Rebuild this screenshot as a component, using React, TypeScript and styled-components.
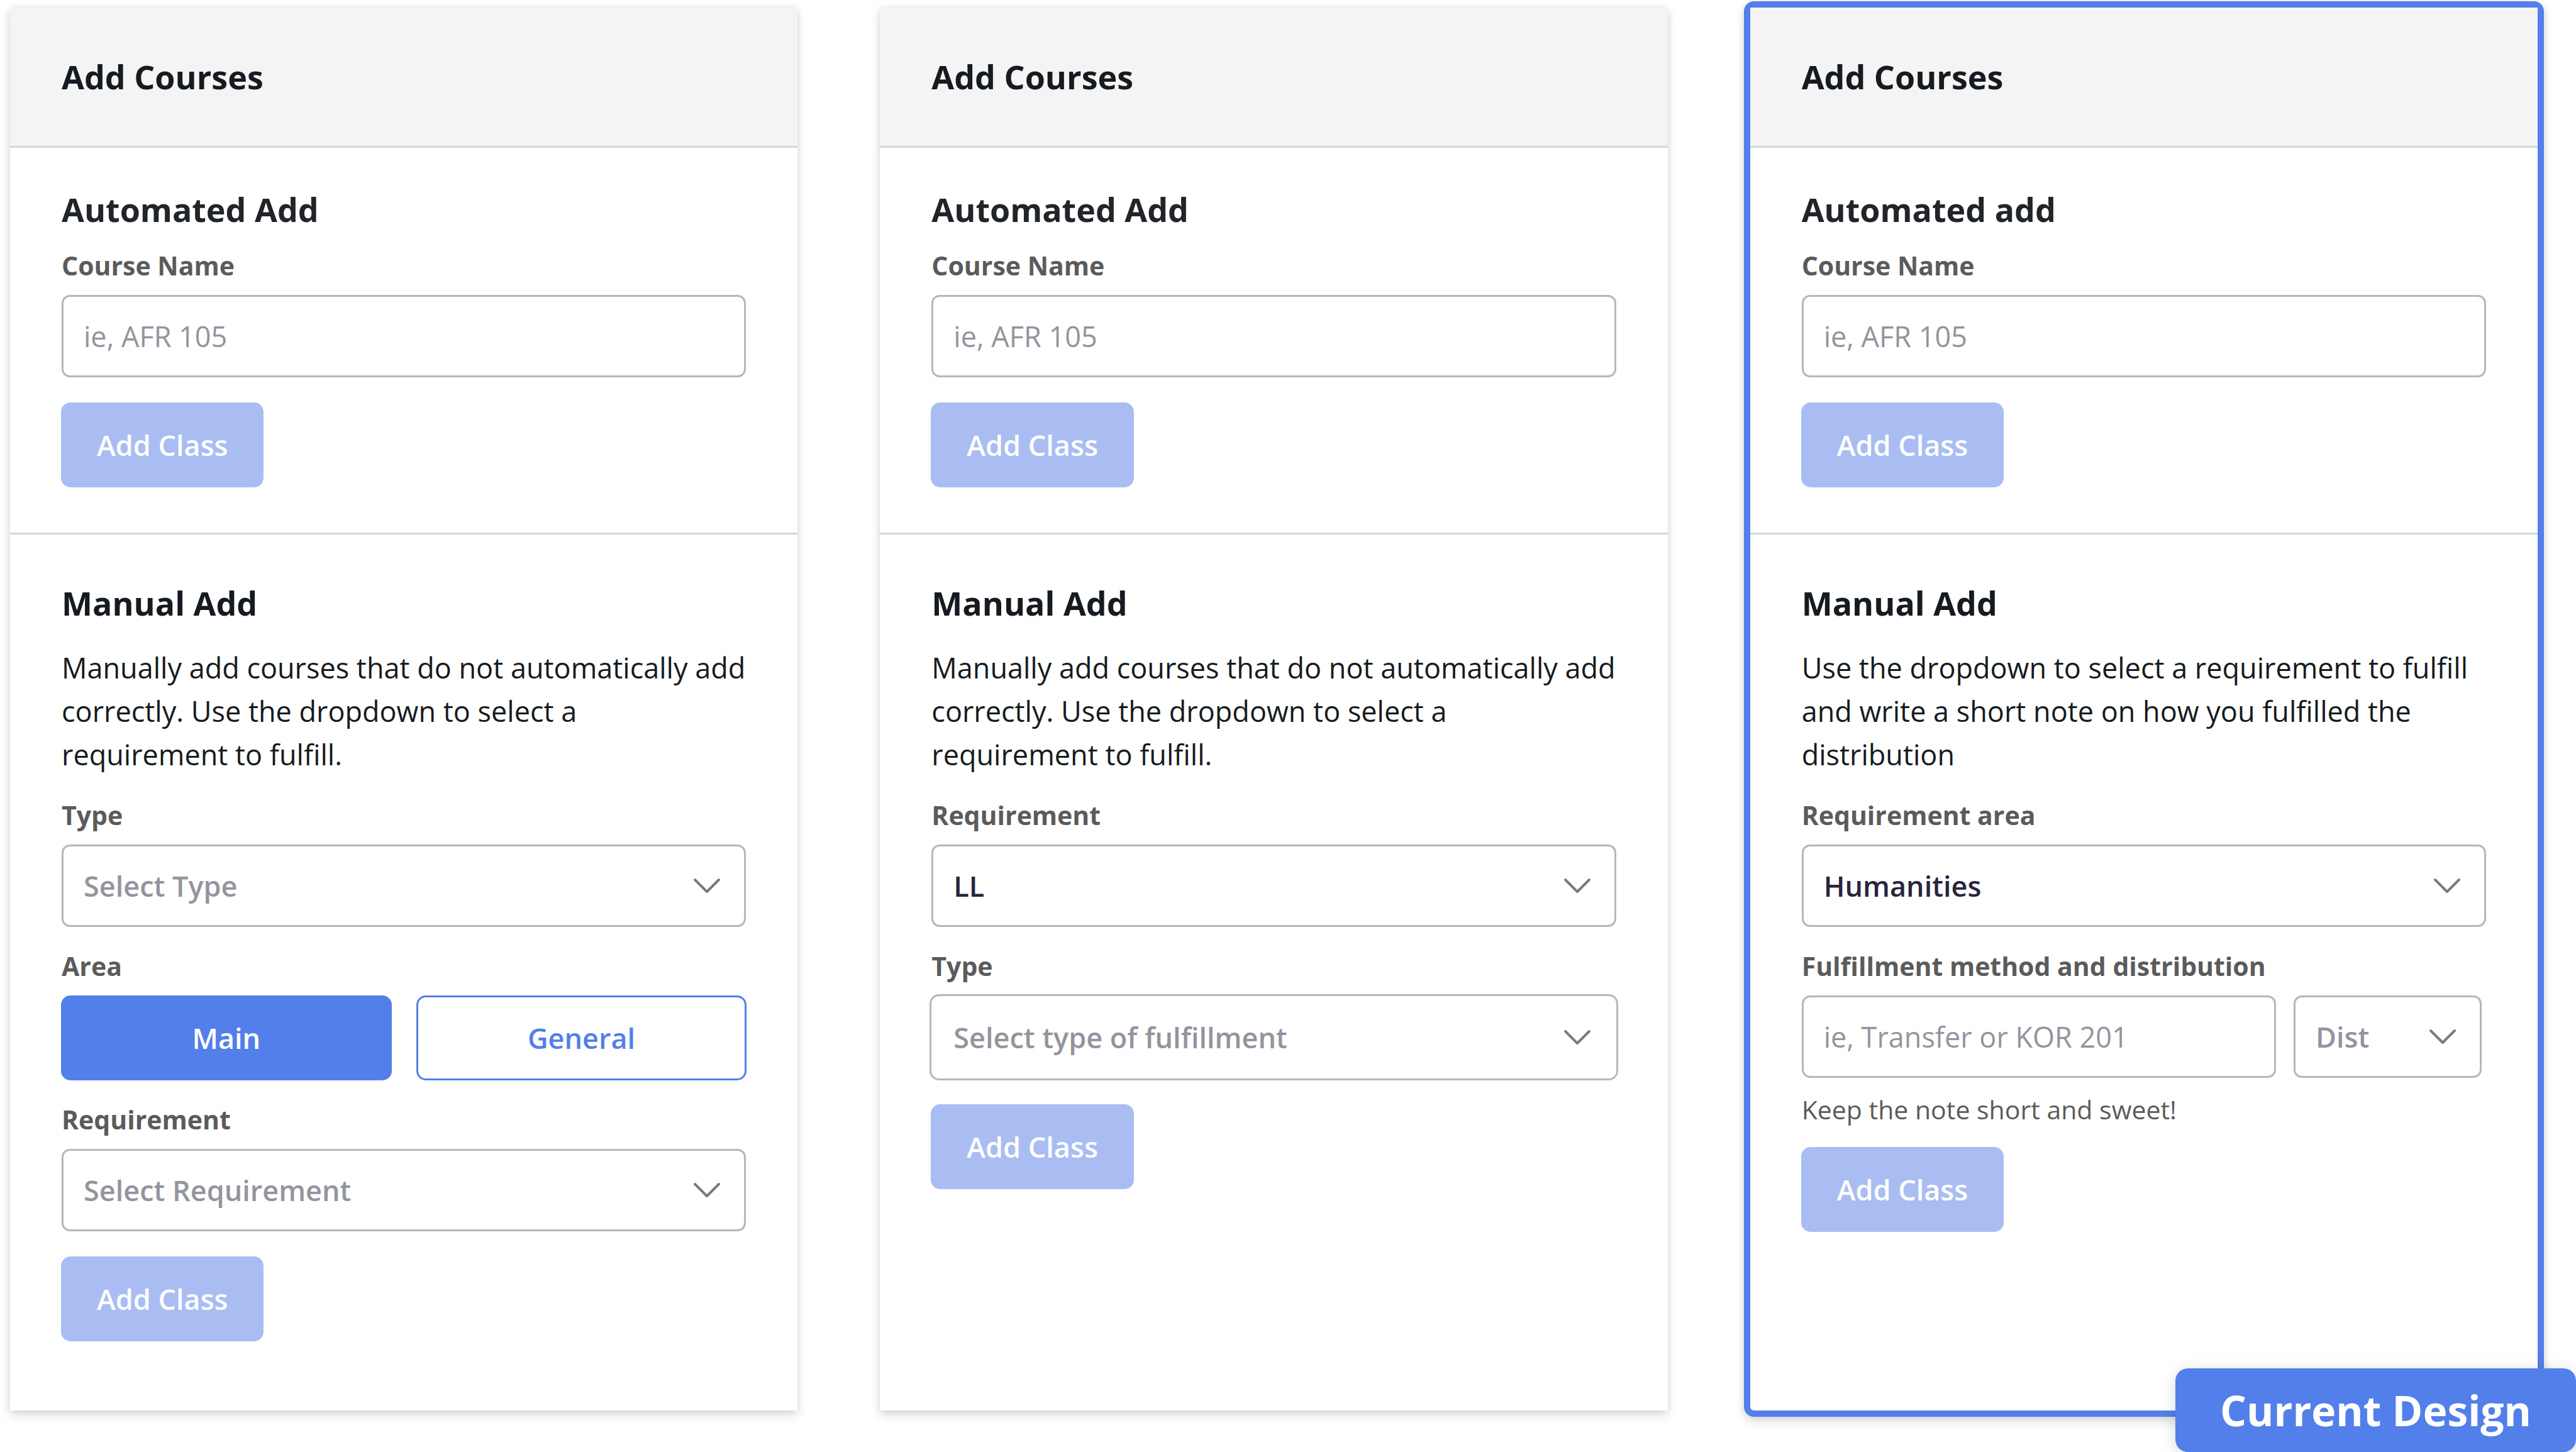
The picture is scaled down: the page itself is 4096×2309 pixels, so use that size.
import React, { useId, useState } from "react";
import styled, { createGlobalStyle, css } from "styled-components";

const color = {
  blue: "#527fe9",
  blueDisabled: "#a9bdf2",
  ink: "#151b20",
  inkSoft: "#212529",
  label: "#5b5b5b",
  value: "#28253d",
  placeholder: "#94949e",
  border: "#b6b6bd",
  line: "#d0d7e0",
  header: "#f4f4f4",
};

const GlobalStyle = createGlobalStyle`
  *, *::before, *::after { box-sizing: border-box; }
  body {
    margin: 0;
    background: #fff;
    color: ${color.ink};
    font-family: "Open Sans", "Noto Sans", sans-serif;
  }
  button, input, select { font-family: inherit; margin: 0; }
`;

const Board = styled.main`
  display: grid;
  grid-template-columns: repeat(3, minmax(0, 1fr));
  gap: 131px;
  padding: 12px 61px 66px 16px;
`;

const Card = styled.section<{ $current?: boolean }>`
  position: relative;
  display: flex;
  flex-direction: column;
  background: #fff;
  box-shadow: 0 7px 16px rgba(0, 0, 0, 0.14), 0 0 10px rgba(0, 0, 0, 0.07);
  ${(p) =>
    p.$current &&
    css`
      margin: -10px;
      border: 10px solid ${color.blue};
      border-radius: 16px;
    `}
`;

const CardHeader = styled.header`
  display: flex;
  align-items: center;
  height: 223px;
  padding: 0 82px;
  background: ${color.header};
  border-bottom: 3px solid ${color.line};
`;

const Title = styled.h2`
  margin: 0;
  font-size: 52px;
  line-height: 72px;
  font-weight: 700;
`;

const Section = styled.form<{ $last?: boolean }>`
  display: flex;
  flex-direction: column;
  padding: ${(p) => (p.$last ? "73px 82px 110px" : "62px 82px 72px")};
  border-bottom: ${(p) => (p.$last ? "none" : `3px solid ${color.line}`)};
`;

const SectionTitle = styled.h3<{ $soft?: boolean }>`
  margin: 0;
  font-size: 52px;
  line-height: 72px;
  font-weight: 700;
  color: ${(p) => (p.$soft ? color.inkSoft : color.ink)};
`;

const Copy = styled.p`
  margin: 32px 0 0;
  font-size: 45px;
  line-height: 69px;
`;

const Group = styled.div<{ $tight?: boolean }>`
  display: flex;
  flex-direction: column;
  margin-top: ${(p) => (p.$tight ? 23 : 32)}px;
`;

const labelText = css`
  margin-bottom: 17px;
  font-size: 41px;
  line-height: 60px;
  font-weight: 700;
  color: ${color.label};
`;

const Label = styled.label`
  ${labelText}
`;

const GroupLabel = styled.span`
  ${labelText}
`;

const fieldBox = css`
  width: 100%;
  height: 131px;
  padding: 0 32px;
  border: 3px solid ${color.border};
  border-radius: 13px;
  background: #fff;
  font-size: 45px;
  line-height: 60px;
  outline: none;
`;

const TextField = styled.input`
  ${fieldBox}
  color: ${color.value};
  &::placeholder {
    color: ${color.placeholder};
    opacity: 1;
  }
`;

const SelectWrap = styled.div<{ $large?: boolean }>`
  display: grid;
  align-items: center;
  margin: ${(p) => (p.$large ? "-2px -3px" : "0")};
  > * {
    grid-area: 1 / 1;
  }
`;

const SelectField = styled.select<{ $large?: boolean; $empty: boolean }>`
  ${fieldBox}
  appearance: none;
  font-weight: 600;
  color: ${(p) => (p.$empty ? color.placeholder : color.value)};
  ${(p) =>
    p.$large &&
    css`
      height: 137px;
      padding: 0 35px;
      border-radius: 15px;
    `}
`;

const Chevron = styled.svg<{ $large?: boolean }>`
  justify-self: end;
  width: 44px;
  height: 26px;
  margin-right: ${(p) => (p.$large ? 43 : 40)}px;
  fill: none;
  stroke: #7b7b7b;
  stroke-width: 4;
  stroke-linecap: round;
  stroke-linejoin: round;
  pointer-events: none;
`;

const SplitRow = styled.div`
  display: grid;
  grid-template-columns: minmax(0, 1fr) 299px;
  gap: 28px;
  padding-right: 7px;
`;

const ToggleRow = styled.div`
  display: grid;
  grid-template-columns: 1fr 1fr;
  gap: 39px;
  margin: 0 -1px;
`;

const Button = styled.button<{ $variant: "solid" | "outline" }>`
  height: 135px;
  padding: 0 54px;
  border: 3px solid ${color.blue};
  border-radius: 15px;
  background: ${(p) => (p.$variant === "solid" ? color.blue : "#fff")};
  color: ${(p) => (p.$variant === "solid" ? "#fff" : color.blue)};
  font-size: 45px;
  line-height: 60px;
  font-weight: 600;
  cursor: pointer;
  &:disabled {
    border-color: ${color.blueDisabled};
    background: ${color.blueDisabled};
    color: #fff;
    cursor: default;
  }
`;

const Submit = styled(Button)<{ $close?: boolean }>`
  align-self: flex-start;
  margin: ${(p) => (p.$close ? 30 : 40)}px 0 0 -1px;
`;

const Hint = styled.p`
  margin: 20px 0 0;
  font-size: 41px;
  line-height: 60px;
  color: ${color.label};
`;

const Badge = styled.strong`
  position: absolute;
  right: -61px;
  bottom: -66px;
  padding: 21px 71px 22px;
  border-radius: 20px;
  background: ${color.blue};
  box-shadow: 0 4px 24px rgba(0, 0, 0, 0.16);
  color: #fff;
  font-size: 66px;
  line-height: 90px;
  font-weight: 700;
  white-space: nowrap;
`;

type DropdownProps = {
  id?: string;
  placeholder: string;
  options: string[];
  initial?: string;
  large?: boolean;
  ariaLabel?: string;
};

function Dropdown({ id, placeholder, options, initial = "", large, ariaLabel }: DropdownProps) {
  const [value, setValue] = useState(initial);
  return (
    <SelectWrap $large={large}>
      <SelectField
        id={id}
        aria-label={ariaLabel}
        $large={large}
        $empty={value === ""}
        value={value}
        onChange={(e) => setValue(e.target.value)}
      >
        <option value="">{placeholder}</option>
        {options.map((o) => (
          <option key={o}>{o}</option>
        ))}
      </SelectField>
      <Chevron $large={large} viewBox="0 0 44 26" aria-hidden="true">
        <path d="M3 3 L22 22 L41 3" />
      </Chevron>
    </SelectWrap>
  );
}

function LabeledDropdown({ label, ...rest }: DropdownProps & { label: string }) {
  const id = useId();
  return (
    <Group>
      <Label htmlFor={id}>{label}</Label>
      <Dropdown id={id} {...rest} />
    </Group>
  );
}

function AutomatedAdd({ title }: { title: string }) {
  const id = useId();
  return (
    <Section>
      <SectionTitle $soft>{title}</SectionTitle>
      <Group $tight>
        <Label htmlFor={id}>Course Name</Label>
        <TextField id={id} type="text" placeholder="ie, AFR 105" />
      </Group>
      <Submit $variant="solid" type="submit" disabled>
        Add Class
      </Submit>
    </Section>
  );
}

function AreaToggle() {
  const id = useId();
  const [area, setArea] = useState("Main");
  return (
    <Group role="group" aria-labelledby={id}>
      <GroupLabel id={id}>Area</GroupLabel>
      <ToggleRow>
        {["Main", "General"].map((name) => (
          <Button
            key={name}
            type="button"
            $variant={area === name ? "solid" : "outline"}
            aria-pressed={area === name}
            onClick={() => setArea(name)}
          >
            {name}
          </Button>
        ))}
      </ToggleRow>
    </Group>
  );
}

function FulfillmentRow() {
  const id = useId();
  return (
    <Group>
      <Label htmlFor={id}>Fulfillment method and distribution</Label>
      <SplitRow>
        <TextField id={id} type="text" placeholder="ie, Transfer or KOR 201" />
        <Dropdown placeholder="Dist" options={["LL", "HS"]} ariaLabel="Distribution" />
      </SplitRow>
      <Hint>Keep the note short and sweet!</Hint>
    </Group>
  );
}

const manualCopy =
  "Manually add courses that do not automatically add correctly. Use the dropdown to select a requirement to fulfill.";

export default function App() {
  return (
    <>
      <GlobalStyle />
      <Board>
        <Card>
          <CardHeader>
            <Title>Add Courses</Title>
          </CardHeader>
          <AutomatedAdd title="Automated Add" />
          <Section $last>
            <SectionTitle>Manual Add</SectionTitle>
            <Copy>{manualCopy}</Copy>
            <LabeledDropdown label="Type" placeholder="Select Type" options={["Transfer", "Course"]} />
            <AreaToggle />
            <LabeledDropdown label="Requirement" placeholder="Select Requirement" options={["LL", "HS"]} />
            <Submit $variant="solid" type="submit" disabled>
              Add Class
            </Submit>
          </Section>
        </Card>

        <Card>
          <CardHeader>
            <Title>Add Courses</Title>
          </CardHeader>
          <AutomatedAdd title="Automated Add" />
          <Section $last>
            <SectionTitle>Manual Add</SectionTitle>
            <Copy>{manualCopy}</Copy>
            <LabeledDropdown label="Requirement" placeholder="Select Requirement" options={["LL", "HS"]} initial="LL" />
            <LabeledDropdown
              label="Type"
              placeholder="Select type of fulfillment"
              options={["Transfer", "Course"]}
              large
            />
            <Submit $variant="solid" type="submit" disabled>
              Add Class
            </Submit>
          </Section>
        </Card>

        <Card $current>
          <CardHeader>
            <Title>Add Courses</Title>
          </CardHeader>
          <AutomatedAdd title="Automated add" />
          <Section $last>
            <SectionTitle>Manual Add</SectionTitle>
            <Copy>
              Use the dropdown to select a requirement to fulfill and write a short note on how you fulfilled the
              distribution
            </Copy>
            <LabeledDropdown
              label="Requirement area"
              placeholder="Select Area"
              options={["Humanities", "Sciences"]}
              initial="Humanities"
            />
            <FulfillmentRow />
            <Submit $variant="solid" $close type="submit" disabled>
              Add Class
            </Submit>
          </Section>
          <Badge>Current Design</Badge>
        </Card>
      </Board>
    </>
  );
}
